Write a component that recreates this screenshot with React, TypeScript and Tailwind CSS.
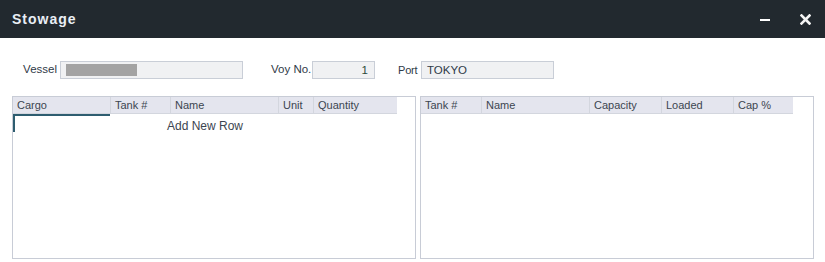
import React from 'react';

const LEFT_COLS = [
  { label: 'Cargo', w: 'w-[97px]' },
  { label: 'Tank #', w: 'w-[60px]' },
  { label: 'Name', w: 'w-[108px]' },
  { label: 'Unit', w: 'w-[35px]' },
  { label: 'Quantity', w: 'w-[84px]' },
];

const RIGHT_COLS = [
  { label: 'Tank #', w: 'w-[60px]' },
  { label: 'Name', w: 'w-[108px]' },
  { label: 'Capacity', w: 'w-[72px]' },
  { label: 'Loaded', w: 'w-[72px]' },
  { label: 'Cap %', w: 'w-[60px]' },
];

const GridHeader: React.FC<{ cols: { label: string; w: string }[] }> = ({ cols }) => (
  <div className="flex h-[17px]">
    {cols.map((c, i) => (
      <div
        key={c.label + i}
        className={`${c.w} flex-none bg-[#e4e5ee] border-b border-[#d3d6de] ${i > 0 ? 'border-l' : ''} border-l-[#d3d6de] px-[4px] text-[11px] leading-[17px] text-[#3c4550]`}
      >
        {c.label}
      </div>
    ))}
  </div>
);

export default function App() {
  return (
    <div className="w-[825px] h-[262px] bg-white font-['Liberation_Sans',Arial,sans-serif] overflow-hidden">
      <div className="h-[38px] bg-[#22292f] flex items-center justify-between pl-[12px] pr-[14px]">
        <span className="text-[14px] font-bold tracking-[1px] text-[#e9eef5]">Stowage</span>
        <div className="flex items-center gap-[30px]">
          <span className="block w-[10px] h-[2px] bg-white mt-[1px]" />
          <svg width="11" height="11" viewBox="0 0 11 11" className="mt-[1px]">
            <path d="M1.5 1.5 L9.5 9.5 M9.5 1.5 L1.5 9.5" stroke="#f4f4f4" strokeWidth="2.6" strokeLinecap="square" />
          </svg>
        </div>
      </div>

      <div className="flex items-center h-[18px] mt-[23px] text-[11.5px] text-[#2f3a48]">
        <span className="w-[57px] text-right">Vessel</span>
        <div className="ml-[3px] w-[183px] h-[18px] bg-[#f0f1f3] border border-[#c9ced7] flex items-center pl-[5px]">
          <span className="block w-[71px] h-[12px] bg-[#a3a3a3]" />
        </div>
        <span className="ml-[28px] w-[41px]">Voy No.</span>
        <div className="w-[63px] h-[18px] bg-[#f0f1f3] border border-[#c9ced7] text-right pr-[6px] leading-[16px] text-[#2d4a3a]">
          1
        </div>
        <span className="ml-[23px] w-[22px] text-[11px] tracking-[-0.2px]">Port</span>
        <div className="ml-[1px] w-[133px] h-[18px] bg-[#f0f1f3] border border-[#c9ced7] pl-[5px] leading-[16px] text-[#2f3a48]">
          TOKYO
        </div>
      </div>

      <div className="flex gap-[4px] mt-[17px] ml-[12px]">
        <div className="w-[404px] h-[163px] border border-[#c8ccd6] bg-white">
          <GridHeader cols={LEFT_COLS} />
          <div className="relative h-[18px]">
            <div className="absolute left-0 top-0 w-[97px] h-[2px] bg-[#2e5d70]" />
            <div className="absolute left-0 top-0 w-[2px] h-[18px] bg-[#2e5d70]" />
            <div className="w-[384px] text-center text-[12px] leading-[24px] text-[#3c4550]">Add New Row</div>
          </div>
        </div>
        <div className="w-[394px] h-[163px] border border-[#c8ccd6] bg-white">
          <GridHeader cols={RIGHT_COLS} />
        </div>
      </div>
    </div>
  );
}
